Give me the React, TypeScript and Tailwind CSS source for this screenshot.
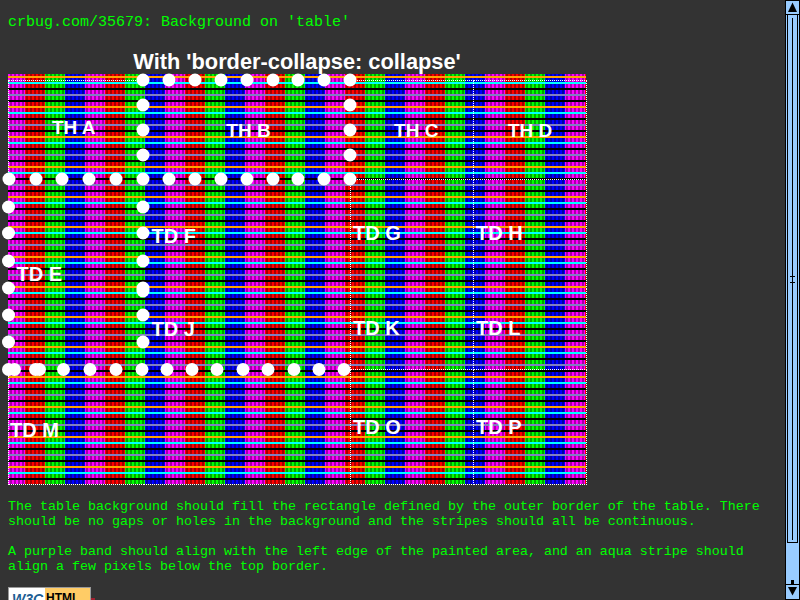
const dots: [number, number][] = [
  ...[143, 169, 195, 221, 247, 273, 298, 324, 350].map((x) => [x, 80] as [number, number]),
  ...[105, 130, 155].flatMap((y) => [[143, y], [350, y]] as [number, number][]),
  ...[9, 36, 62, 89, 116, 143, 169, 195, 221, 247, 273, 298, 324, 350].map((x) => [x, 179] as [number, number]),
  ...[207, 233, 261, 288, 315, 342].map((y) => [8.5, y] as [number, number]),
  ...[207, 233, 261, 288, 291, 315, 342].map((y) => [143, y] as [number, number]),
  ...[8.5, 14.5, 35.5, 39.5, 63.5, 90, 116, 142, 167, 192, 217, 243, 268, 294, 319, 344].map((x) => [x, 369.5] as [number, number]),
];

export default function App() {
  const cell = "border border-dotted border-white p-[3px] text-white font-bold align-middle";
  const th = cell + " text-center text-[19px]";
  const td = cell + " text-left text-[20px]";
  return (
    <div className="flex h-[600px] w-[800px] overflow-hidden bg-[#333333]">
      <main className="flex-1 overflow-hidden px-2 pt-[14px] font-['Liberation_Mono',monospace] text-[13.33px] leading-[15px] text-[#00ff00]">
        <h1 className="text-[15px] leading-[17px] font-normal">crbug.com/35679: Background on 'table'</h1>
        <div className="mt-[18px] w-[578px] text-center font-['Liberation_Sans',sans-serif] text-[21.8px] leading-[25px] font-bold text-white">With 'border-collapse: collapse'</div>
        <div className="relative h-[410px] w-[578px] pt-[6px] bg-[repeating-linear-gradient(180deg,transparent_0_2px,#ffa500_2px_4px,transparent_4px_8px,#00ffff_8px_10px,transparent_10px_14px,#000_14px_16px,transparent_16px_20px,#8080c0_20px_22px,transparent_22px_26px,#000_26px_28px,transparent_28px_30px),repeating-linear-gradient(90deg,transparent_0_2px,rgba(0,0,0,0.35)_2px_4px),repeating-linear-gradient(90deg,#ff00ff_0_17px,#ff0000_17px_37px,#00ff00_37px_57px,#0000ff_57px_77px,#ff00ff_77px_80px)]">
          <table className="w-[578px] table-fixed border-collapse font-['Liberation_Sans',sans-serif]">
            <colgroup>
              <col className="w-[135px]" />
              <col className="w-[207px]" />
              <col className="w-[123px]" />
              <col className="w-[113px]" />
            </colgroup>
            <tbody>
              <tr className="h-[99px]">
                <th className={th + " border-r-0 border-b-0 pr-[8px] pb-[8px]"}>TH A</th>
                <th className={th + " border-0 pl-[6px]"}>TH B</th>
                <th className={th + " border-l-0 pl-[12px]"}>TH C</th>
                <th className={th}>TH D</th>
              </tr>
              <tr className="h-[109px]">
                <td rowSpan={2} className={td + " border-0 pl-[8px]"}>TD E</td>
                <td className={td + " border-0 pl-[8px] pt-[8px]"}>TD F</td>
                <td className={td + " border-b-0 pl-[2px] pb-[5px]"}>TD G</td>
                <td className={td + " border-b-0 pl-[2px] pb-[5px]"}>TD H</td>
              </tr>
              <tr className="h-[81px]">
                <td className={td + " border-0 pl-[8px]"}>TD J</td>
                <td className={td + " border-t-0 pl-[2px]"}>TD K</td>
                <td className={td + " border-t-0 pl-[2px]"}>TD L</td>
              </tr>
              <tr className="h-[115px]">
                <td colSpan={2} className={td + " border-t-0 pt-[10px] pl-[1px]"}>TD M</td>
                <td className={td + " pl-[2px]"}>TD O</td>
                <td className={td + " pl-[2px]"}>TD P</td>
              </tr>
            </tbody>
          </table>
          <svg className="absolute top-0 left-0 overflow-visible" width="578" height="410" viewBox="8 74 578 410">
            {dots.map(([x, y], i) => (
              <circle key={i} cx={x} cy={y} r="6.5" fill="#fff" />
            ))}
          </svg>
        </div>
        <p className="mt-[15px]">The table background should fill the rectangle defined by the outer border of the table. There should be no gaps or holes in the background and the stripes should all be continuous.</p>
        <p className="mt-[15px]">A purple band should align with the left edge of the painted area, and an aqua stripe should align a few pixels below the top border.</p>
        <div className="relative mt-[13px] flex h-[31px] w-[83px] border border-[#999999] font-['Liberation_Sans',sans-serif] font-bold">
          <span className="w-[36px] bg-white pt-[3px] pl-[3px] text-[14px] leading-[16px] text-[#1c5e93] italic">W3C</span>
          <span className="flex-1 bg-[#ffcc66] pt-[3px] pl-[1px] text-[12px] leading-[14px] text-black">HTML</span>
          <svg className="absolute top-[9px] left-[82px]" width="4" height="4" viewBox="0 0 4 4"><rect width="4" height="3" y="1" fill="#a02030" /></svg>
        </div>
      </main>
      <aside className="flex h-[600px] w-[15px] flex-col border-x border-black bg-[#99ccff]">
        <div className="h-[15px] shrink-0 border-y border-black">
          <svg viewBox="0 0 13 13" className="h-[13px] w-[13px]"><path d="M6.5 1.5 L11 11 L2 11 Z" fill="#000" /></svg>
        </div>
        <div className="mx-px flex h-[528px] shrink-0 justify-center border-x border-b border-black">
          <div className="relative mt-[3px] h-[522px] w-px bg-black">
            <div className="absolute top-[258px] left-[-2px] h-px w-[5px] bg-black" />
            <div className="absolute top-[264px] left-[-2px] h-px w-[5px] bg-black" />
          </div>
        </div>
        <div className="flex flex-1 items-end justify-center">
          <div className="h-[4px] w-[3px] bg-black" />
        </div>
        <div className="h-[16px] shrink-0 border-y border-black">
          <svg viewBox="0 0 13 14" className="h-[14px] w-[13px]"><path d="M6.5 10.5 L11 2 L2 2 Z" fill="#000" /></svg>
        </div>
      </aside>
    </div>
  );
}
